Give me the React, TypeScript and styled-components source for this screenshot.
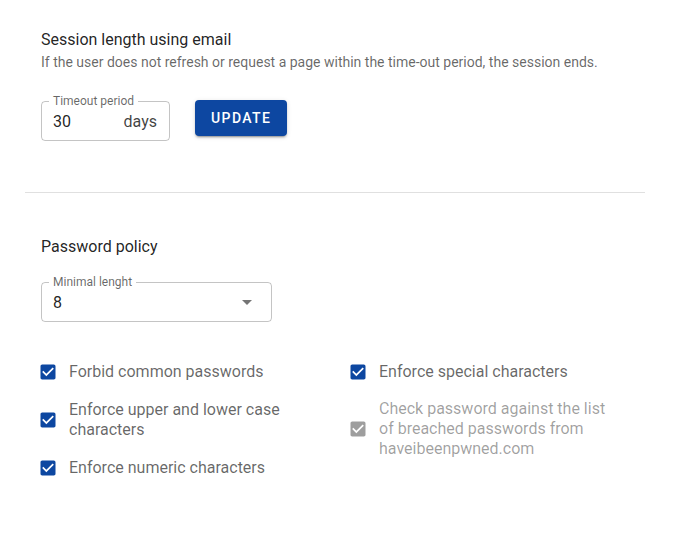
import styled, { createGlobalStyle } from 'styled-components';

const GlobalStyle = createGlobalStyle`
    body {
        margin: 0;
        background: #ffffff;
        font-family: Roboto, 'Liberation Sans', sans-serif;
        color: rgba(0, 0, 0, 0.87);
    }
`;

interface PolicyOption {
    label: string;
    checked: boolean;
    disabled?: boolean;
}

const leftOptions: PolicyOption[] = [
    { label: 'Forbid common passwords', checked: true },
    { label: 'Enforce upper and lower case characters', checked: true },
    { label: 'Enforce numeric characters', checked: true },
];

const rightOptions: PolicyOption[] = [
    { label: 'Enforce special characters', checked: true },
    {
        label: 'Check password against the list of breached passwords from haveibeenpwned.com',
        checked: true,
        disabled: true,
    },
];

const CheckIcon = ({ disabled }: { disabled?: boolean }) => (
    <svg width="20" height="20" viewBox="0 0 24 24">
        <path
            fill={disabled ? 'rgba(0, 0, 0, 0.38)' : '#0d47a1'}
            d="M19 3H5c-1.11 0-2 .9-2 2v14c0 1.1.89 2 2 2h14c1.11 0 2-.9 2-2V5c0-1.1-.89-2-2-2zm-9 14l-5-5 1.41-1.41L10 14.17l7.59-7.59L19 8l-9 9z"
        />
    </svg>
);

const App = () => {
    const renderOption = (option: PolicyOption) => (
        <OptionRow key={option.label}>
            <CheckBox>
                <CheckIcon disabled={option.disabled} />
            </CheckBox>
            <OptionLabel $disabled={option.disabled}>{option.label}</OptionLabel>
        </OptionRow>
    );

    return (
        <>
            <GlobalStyle />
            <Page>
                <Section>
                    <Title>Session length using email</Title>
                    <Subtitle>
                        If the user does not refresh or request a page within the time-out
                        period, the session ends.
                    </Subtitle>
                    <FieldRow>
                        <OutlinedField $width={129}>
                            <FieldLabel>Timeout period</FieldLabel>
                            <FieldValue>30</FieldValue>
                            <Adornment>days</Adornment>
                        </OutlinedField>
                        <UpdateButton>Update</UpdateButton>
                    </FieldRow>
                </Section>
                <Divider />
                <PolicySection>
                    <Title>Password policy</Title>
                    <SelectWrap>
                        <OutlinedField $width={231}>
                            <FieldLabel>Minimal lenght</FieldLabel>
                            <FieldValue>8</FieldValue>
                            <Arrow />
                        </OutlinedField>
                    </SelectWrap>
                    <OptionsGrid>
                        <OptionColumn>{leftOptions.map(renderOption)}</OptionColumn>
                        <OptionColumn>{rightOptions.map(renderOption)}</OptionColumn>
                    </OptionsGrid>
                </PolicySection>
            </Page>
        </>
    );
};

const Page = styled.div`
    width: 620px;
    margin: 0 25px;
    padding-top: 28px;
`;

const Section = styled.section`
    padding: 0 16px 51px;
`;

const PolicySection = styled.section`
    padding: 42px 16px 40px;
`;

const Title = styled.div`
    font-size: 16px;
    line-height: 24px;
    color: rgba(0, 0, 0, 0.87);
`;

const Subtitle = styled.div`
    font-size: 14px;
    line-height: 20px;
    color: rgba(0, 0, 0, 0.6);
`;

const FieldRow = styled.div`
    display: flex;
    align-items: flex-start;
    gap: 25px;
    margin-top: 28px;
`;

const OutlinedField = styled.div<{ $width: number }>`
    position: relative;
    box-sizing: border-box;
    width: ${({ $width }) => $width}px;
    height: 40px;
    margin-top: 1px;
    padding: 0 12px 0 11px;
    border: 1px solid rgba(0, 0, 0, 0.23);
    border-radius: 4px;
    display: flex;
    align-items: center;
    justify-content: space-between;
`;

const FieldLabel = styled.span`
    position: absolute;
    top: -8px;
    left: 7px;
    padding: 0 4px;
    background: #ffffff;
    font-size: 12px;
    line-height: 14px;
    color: rgba(0, 0, 0, 0.6);
`;

const FieldValue = styled.span`
    font-size: 16px;
    line-height: 24px;
    padding-top: 2px;
    color: rgba(0, 0, 0, 0.87);
`;

const Adornment = styled.span`
    font-size: 16px;
    line-height: 24px;
    padding-top: 2px;
    color: rgba(0, 0, 0, 0.75);
`;

const Arrow = styled.span`
    width: 0;
    height: 0;
    margin-right: 7px;
    border-left: 5px solid transparent;
    border-right: 5px solid transparent;
    border-top: 5px solid rgba(0, 0, 0, 0.54);
`;

const UpdateButton = styled.button`
    height: 36px;
    padding: 0 16px;
    border: none;
    border-radius: 4px;
    background: #0d47a1;
    color: #ffffff;
    font-family: Roboto, 'Liberation Sans', sans-serif;
    font-size: 14px;
    font-weight: 500;
    letter-spacing: 1.4px;
    text-transform: uppercase;
    box-shadow: 0 3px 1px -2px rgba(0, 0, 0, 0.2), 0 2px 2px 0 rgba(0, 0, 0, 0.14),
        0 1px 5px 0 rgba(0, 0, 0, 0.12);
`;

const Divider = styled.hr`
    margin: 0;
    border: none;
    border-top: 1px solid rgba(0, 0, 0, 0.12);
`;

const SelectWrap = styled.div`
    margin-top: 23px;
`;

const OptionsGrid = styled.div`
    display: grid;
    grid-template-columns: 310px 1fr;
    margin-top: 29px;
`;

const OptionColumn = styled.div`
    display: flex;
    flex-direction: column;
    gap: 6px;
`;

const OptionRow = styled.div`
    display: flex;
    align-items: center;
    min-height: 42px;
`;

const CheckBox = styled.span`
    display: flex;
    width: 20px;
    height: 20px;
    margin-left: -3px;
    margin-right: 11px;
    flex-shrink: 0;
`;

const OptionLabel = styled.span<{ $disabled?: boolean }>`
    max-width: 240px;
    font-size: 16px;
    line-height: 20px;
    color: ${({ $disabled }) => ($disabled ? 'rgba(0, 0, 0, 0.38)' : 'rgba(0, 0, 0, 0.6)')};
`;

export default App;
